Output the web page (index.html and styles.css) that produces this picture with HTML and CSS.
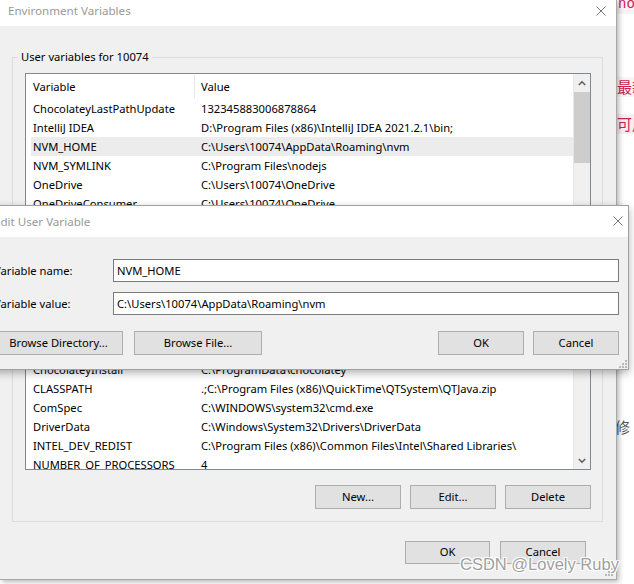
FILE: index.html
```html
<!DOCTYPE html>
<html>
<head>
<meta charset="utf-8">
<link rel="stylesheet" href="styles.css">
</head>
<body>
<div class="screen">
  <div class="article">
    <div class="a-no">no</div>
    <div class="a-line a-1">最新</div>
    <div class="a-line a-2">可用</div>
    <div class="a-line a-3">修</div>
  </div>

  <div class="win main">
    <div class="titlebar">
      <span class="title">Environment Variables</span>
      <svg class="close" width="10" height="10" viewBox="0 0 10 10"><path d="M0.5 0.5L9.5 9.5M9.5 0.5L0.5 9.5" stroke="#777" stroke-width="1" fill="none"/></svg>
    </div>
    <div class="group user">
      <span class="group-label">User variables for 10074</span>
      <div class="list">
        <div class="list-main">
          <div class="hdr"><span class="c1">Variable</span><span class="c2">Value</span></div>
          <div class="row"><span class="c1">ChocolateyLastPathUpdate</span><span class="c2">132345883006878864</span></div>
          <div class="row"><span class="c1">IntelliJ IDEA</span><span class="c2">D:\Program Files (x86)\IntelliJ IDEA 2021.2.1\bin;</span></div>
          <div class="row sel"><span class="c1">NVM_HOME</span><span class="c2">C:\Users\10074\AppData\Roaming\nvm</span></div>
          <div class="row"><span class="c1">NVM_SYMLINK</span><span class="c2">C:\Program Files\nodejs</span></div>
          <div class="row"><span class="c1">OneDrive</span><span class="c2">C:\Users\10074\OneDrive</span></div>
          <div class="row"><span class="c1">OneDriveConsumer</span><span class="c2">C:\Users\10074\OneDrive</span></div>
          <div class="row"><span class="c1">Path</span><span class="c2">C:\Users\10074\AppData\Local\Microsoft\WindowsApps;</span></div>
          <div class="row"><span class="c1">TEMP</span><span class="c2">C:\Users\10074\AppData\Local\Temp</span></div>
        </div>
        <div class="vscroll">
          <div class="arrow"><svg width="8" height="6" viewBox="0 0 8 6"><path d="M0.8 5L4 1.8L7.2 5" stroke="#606060" stroke-width="1.6" fill="none"/></svg></div>
          <div class="thumb"></div>
          <div class="fill"></div>
        </div>
      </div>
      <div class="btns">
        <button class="btn">New...</button>
        <button class="btn">Edit...</button>
        <button class="btn">Delete</button>
      </div>
    </div>

    <div class="group system">
      <span class="group-label">System variables</span>
      <div class="list list-sys">
        <div class="list-main">
          <div class="hdr"><span class="c1">Variable</span><span class="c2">Value</span></div>
          <div class="row"><span class="c1">ACSvcPort</span><span class="c2">17532</span></div>
          <div class="row"><span class="c1">ChocolateyInstall</span><span class="c2">C:\ProgramData\chocolatey</span></div>
          <div class="row"><span class="c1">CLASSPATH</span><span class="c2">.;C:\Program Files (x86)\QuickTime\QTSystem\QTJava.zip</span></div>
          <div class="row"><span class="c1">ComSpec</span><span class="c2">C:\WINDOWS\system32\cmd.exe</span></div>
          <div class="row"><span class="c1">DriverData</span><span class="c2">C:\Windows\System32\Drivers\DriverData</span></div>
          <div class="row"><span class="c1">INTEL_DEV_REDIST</span><span class="c2">C:\Program Files (x86)\Common Files\Intel\Shared Libraries\</span></div>
          <div class="row"><span class="c1">NUMBER_OF_PROCESSORS</span><span class="c2">4</span></div>
          <div class="row"><span class="c1">OS</span><span class="c2">Windows_NT</span></div>
        </div>
        <div class="vscroll">
          <div class="fill"></div>
          <div class="arrow"><svg width="8" height="6" viewBox="0 0 8 6"><path d="M0.8 1L4 4.2L7.2 1" stroke="#606060" stroke-width="1.6" fill="none"/></svg></div>
        </div>
      </div>
      <div class="btns">
        <button class="btn">New...</button>
        <button class="btn">Edit...</button>
        <button class="btn">Delete</button>
      </div>
    </div>

    <div class="footer">
      <button class="btn btn-sm">OK</button>
      <button class="btn btn-sm">Cancel</button>
    </div>
    <svg class="grip grip-main" width="8" height="8" viewBox="0 0 8 8"><g fill="#b8b8b8"><rect x="6" y="0" width="2" height="2"/><rect x="3" y="3" width="2" height="2"/><rect x="6" y="3" width="2" height="2"/><rect x="0" y="6" width="2" height="2"/><rect x="3" y="6" width="2" height="2"/><rect x="6" y="6" width="2" height="2"/></g></svg>
  </div>

  <div class="win edit">
    <div class="titlebar edit-title">
      <span class="title">Edit User Variable</span>
      <svg class="close" width="10" height="10" viewBox="0 0 10 10"><path d="M0.5 0.5L9.5 9.5M9.5 0.5L0.5 9.5" stroke="#777" stroke-width="1" fill="none"/></svg>
    </div>
    <div class="edit-body">
      <div class="field"><span class="field-label">Variable name:</span><div class="input">NVM_HOME</div></div>
      <div class="field"><span class="field-label">Variable value:</span><div class="input">C:\Users\10074\AppData\Roaming\nvm</div></div>
      <div class="edit-btns">
        <button class="btn btn-dir">Browse Directory...</button>
        <button class="btn btn-file">Browse File...</button>
        <button class="btn btn-ok">OK</button>
        <button class="btn btn-cancel">Cancel</button>
      </div>
    </div>
    <svg class="grip grip-edit" width="8" height="8" viewBox="0 0 8 8"><g fill="#b8b8b8"><rect x="6" y="0" width="2" height="2"/><rect x="3" y="3" width="2" height="2"/><rect x="6" y="3" width="2" height="2"/><rect x="0" y="6" width="2" height="2"/><rect x="3" y="6" width="2" height="2"/><rect x="6" y="6" width="2" height="2"/></g></svg>
  </div>

  <div class="watermark">CSDN @Lovely Ruby</div>
</div>
</body>
</html>
```

FILE: styles.css
```css
* { box-sizing: border-box; }
html, body { margin: 0; padding: 0; background: #fff; }
body {
  font-family: "Noto Sans", "Segoe UI", sans-serif;
  font-size: 11.2px;
  color: #000;
}
.screen { position: relative; width: 634px; height: 584px; overflow: hidden; }

/* page underneath */
.article {
  position: absolute; left: 617px; top: 0; width: 40px;
  font-family: "Noto Sans CJK SC", sans-serif; font-size: 15px; line-height: 20px;
  color: #c7254e; white-space: nowrap;
}
.a-no { margin-top: -6px; padding-left: 1px; font-family: "Liberation Mono", monospace; font-size: 14px; background: #f9f2f4; }
.a-line { padding-left: 0; }
.a-1 { margin-top: 63px; background: #fdf4f7; }
.a-2 { margin-top: 17px; background: #fbeef2; }
.a-3 { margin-top: 283px; color: #555; margin-left: -2px; }

/* windows */
.win { position: absolute; background: #f0f0f0; }
.main {
  left: 0; top: 0; width: 617px; height: 580px;
  border-right: 1px solid #a8a8a8; border-bottom: 1px solid #a8a8a8;
  box-shadow: 2px 2px 5px rgba(0,0,0,0.28);
}
.titlebar {
  height: 26px; background: #fff; color: #999;
  display: flex; align-items: center; justify-content: space-between;
  padding: 0 10px 5px 8px;
  font-size: 11.6px;
}
.close { display: block; }

.group {
  position: relative; border: 1px solid #dcdcdc;
  margin: 0 13px 0 12px; padding: 15px 11px 12px 12px;
}
.user { margin-top: 31px; }
.system { margin-top: 14px; }
.group-label {
  position: absolute; top: -9px; left: 5px; padding: 0 3px;
  background: #f0f0f0; line-height: 16px;
}

.list { display: flex; border: 1px solid #828790; background: #fff; height: 160px; overflow: hidden; }
.list-sys { height: 155px; }
.list-main { flex: 1; padding-left: 5px; overflow: hidden; }
.hdr { display: flex; height: 25px; }
.hdr .c1 { border-right: 1px solid #e5e5e5; margin: 1px 0 1px 0; }
.hdr span { display: flex; align-items: center; }
.c1 { width: 164px; flex: none; padding-left: 2px; white-space: nowrap; }
.c2 { padding-left: 6px; white-space: nowrap; }
.row { display: flex; height: 19px; align-items: center; }
.row.sel { background: #ececec; }

.vscroll { width: 17px; flex: none; background: #f0f0f0; display: flex; flex-direction: column; border-left: 1px solid #e6e6e6; }
.arrow { height: 17px; display: flex; align-items: center; justify-content: center; }
.thumb { height: 71px; margin: 1px 0 0 0; background: #cdcdcd; }
.fill { flex: 1; }

.btn {
  font: inherit; color: #000; padding: 0 0 2px 0; margin: 0;
  width: 86px; height: 24px;
  border: 1px solid #adadad; background: #e1e1e1;
}
.btns { display: flex; justify-content: flex-end; gap: 9px; margin-top: 15px; }
.footer { display: flex; justify-content: flex-end; gap: 10px; margin-top: 19px; padding-right: 30px; }
.btn-sm { height: 23px; width: 86px; }
.footer .btn-sm:first-child { width: 85px; }

.grip { position: absolute; display: block; }
.grip-main { right: 3px; bottom: 3px; }

/* edit dialog */
.edit {
  left: -15px; top: 205px; width: 644px; height: 165px;
  border: 1px solid #a0a0a0;
  box-shadow: 0 3px 8px rgba(0,0,0,0.3);
}
.edit-title { height: 31px; padding: 0 5px 1px 8px; }
.edit-body { padding: 22px 9px 14px 8px; }
.field { display: flex; align-items: center; height: 23px; }
.field + .field { margin-top: 10px; }
.field-label { width: 119px; flex: none; }
.input {
  flex: 1; height: 23px; border: 1px solid #7a7a7a; background: #fff;
  padding-left: 3px; display: flex; align-items: center; white-space: nowrap;
}
.edit-btns { display: flex; margin-top: 16px; }
.btn-dir { width: 129px; }
.btn-file { width: 128px; margin-left: 11px; }
.btn-ok { margin-left: auto; }
.btn-cancel { margin-left: 9px; }
.grip-edit { right: 1px; bottom: 1px; }

.watermark {
  position: absolute; left: 460px; top: 555px;
  font-family: "Liberation Sans", sans-serif; font-size: 16.5px; line-height: 19px;
  color: rgba(140,140,140,0.85);
  text-shadow: 1px 1px 0 #fff, -1px -1px 0 #fff, 1px -1px 0 #fff, -1px 1px 0 #fff;
  white-space: nowrap;
}
```
